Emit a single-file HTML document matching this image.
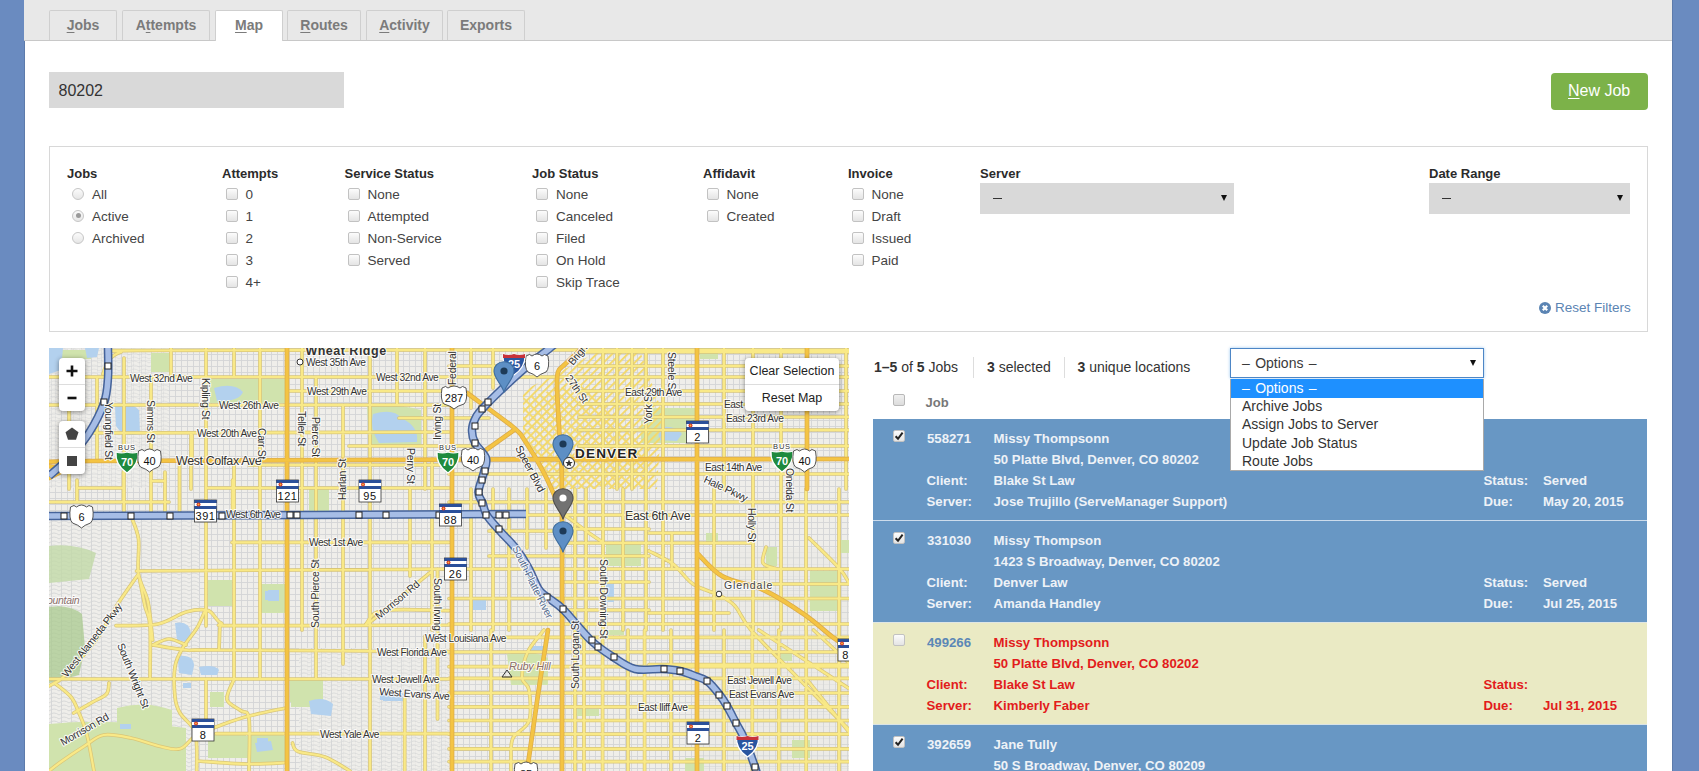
<!DOCTYPE html>
<html><head><meta charset="utf-8">
<style>
*{box-sizing:border-box;margin:0;padding:0}
html,body{width:1699px;height:771px;overflow:hidden}
body{background:#6a8bc0;font-family:"Liberation Sans",sans-serif;color:#333;position:relative}
.t{position:absolute;white-space:nowrap}
.b{position:absolute}
.cb{position:absolute;width:12px;height:12px;border:1px solid #c2c2c2;border-radius:2px;background:linear-gradient(#fcfcfc,#e4e4e4)}
.rd{position:absolute;width:12px;height:12px;border:1px solid #c6c6c6;border-radius:50%;background:linear-gradient(#fbfbfb,#e6e6e6)}
.tab{position:absolute;top:10px;height:30px;border:1px solid #cfcfcf;border-bottom:none;background:#e8e8e8;color:#7b7b7b;font-weight:bold;font-size:14px;text-align:center;line-height:28px;border-radius:2px 2px 0 0}
.tab.act{background:#fff;height:31px}
u{text-decoration:underline;text-underline-offset:2px;text-decoration-thickness:1px}
</style></head><body>

<div class="b" style="left:24px;top:0;width:1648px;height:771px;background:#fff"></div>
<div class="b" style="left:24px;top:0;width:1px;height:771px;background:#5d7bab"></div>
<div class="b" style="left:1672px;top:0;width:1px;height:771px;background:#5d7bab"></div>
<div class="b" style="left:24px;top:0;width:1648px;height:41px;background:#e8e8e8;border-bottom:1px solid #c8c8c8"></div>
<div class="tab" style="left:49px;width:68px"><u>J</u>obs</div>
<div class="tab" style="left:122px;width:88px">A<u>t</u>tempts</div>
<div class="tab act" style="left:215px;width:68px"><u>M</u>ap</div>
<div class="tab" style="left:287px;width:74px"><u>R</u>outes</div>
<div class="tab" style="left:366px;width:77px"><u>A</u>ctivity</div>
<div class="tab" style="left:447px;width:78px">Exports</div>
<div class="b" style="left:49px;top:72px;width:295px;height:36px;background:#d9d9d9"></div>
<div class="t" style="left:58.5px;top:82.66px;font-size:16px;line-height:16px;color:#333;">80202</div>
<div class="b" style="left:1551px;top:73px;width:97px;height:37px;background:#7cb249;border-radius:4px"></div>
<div class="t" style="left:1568px;top:83.46px;font-size:16px;line-height:16px;color:#fff;"><u>N</u>ew Job</div>
<div class="b" style="left:49px;top:146px;width:1599px;height:186px;border:1px solid #d8d8d8"></div>
<div class="t" style="left:67px;top:166.80px;font-size:13px;line-height:13px;color:#2b2b2b;font-weight:bold;">Jobs</div>
<div class="t" style="left:222px;top:166.80px;font-size:13px;line-height:13px;color:#2b2b2b;font-weight:bold;">Attempts</div>
<div class="t" style="left:344.5px;top:166.80px;font-size:13px;line-height:13px;color:#2b2b2b;font-weight:bold;">Service Status</div>
<div class="t" style="left:532px;top:166.80px;font-size:13px;line-height:13px;color:#2b2b2b;font-weight:bold;">Job Status</div>
<div class="t" style="left:703px;top:166.80px;font-size:13px;line-height:13px;color:#2b2b2b;font-weight:bold;">Affidavit</div>
<div class="t" style="left:848px;top:166.80px;font-size:13px;line-height:13px;color:#2b2b2b;font-weight:bold;">Invoice</div>
<div class="t" style="left:980px;top:166.80px;font-size:13px;line-height:13px;color:#2b2b2b;font-weight:bold;">Server</div>
<div class="t" style="left:1429px;top:166.80px;font-size:13px;line-height:13px;color:#2b2b2b;font-weight:bold;">Date Range</div>
<div class="rd" style="left:72px;top:187.5px"></div>
<div class="t" style="left:92px;top:188.27px;font-size:13.5px;line-height:13.5px;color:#444;">All</div>
<div class="rd" style="left:72px;top:209.5px"></div>
<div class="b" style="left:75.5px;top:213.0px;width:5px;height:5px;border-radius:50%;background:#9a9a9a"></div>
<div class="t" style="left:92px;top:210.27px;font-size:13.5px;line-height:13.5px;color:#444;">Active</div>
<div class="rd" style="left:72px;top:231.5px"></div>
<div class="t" style="left:92px;top:232.27px;font-size:13.5px;line-height:13.5px;color:#444;">Archived</div>
<div class="cb" style="left:226px;top:187.5px"></div>
<div class="t" style="left:245.5px;top:188.27px;font-size:13.5px;line-height:13.5px;color:#444;">0</div>
<div class="cb" style="left:226px;top:209.5px"></div>
<div class="t" style="left:245.5px;top:210.27px;font-size:13.5px;line-height:13.5px;color:#444;">1</div>
<div class="cb" style="left:226px;top:231.5px"></div>
<div class="t" style="left:245.5px;top:232.27px;font-size:13.5px;line-height:13.5px;color:#444;">2</div>
<div class="cb" style="left:226px;top:253.5px"></div>
<div class="t" style="left:245.5px;top:254.27px;font-size:13.5px;line-height:13.5px;color:#444;">3</div>
<div class="cb" style="left:226px;top:275.5px"></div>
<div class="t" style="left:245.5px;top:276.27px;font-size:13.5px;line-height:13.5px;color:#444;">4+</div>
<div class="cb" style="left:348px;top:187.5px"></div>
<div class="t" style="left:367.5px;top:188.27px;font-size:13.5px;line-height:13.5px;color:#444;">None</div>
<div class="cb" style="left:348px;top:209.5px"></div>
<div class="t" style="left:367.5px;top:210.27px;font-size:13.5px;line-height:13.5px;color:#444;">Attempted</div>
<div class="cb" style="left:348px;top:231.5px"></div>
<div class="t" style="left:367.5px;top:232.27px;font-size:13.5px;line-height:13.5px;color:#444;">Non-Service</div>
<div class="cb" style="left:348px;top:253.5px"></div>
<div class="t" style="left:367.5px;top:254.27px;font-size:13.5px;line-height:13.5px;color:#444;">Served</div>
<div class="cb" style="left:536px;top:187.5px"></div>
<div class="t" style="left:556px;top:188.27px;font-size:13.5px;line-height:13.5px;color:#444;">None</div>
<div class="cb" style="left:536px;top:209.5px"></div>
<div class="t" style="left:556px;top:210.27px;font-size:13.5px;line-height:13.5px;color:#444;">Canceled</div>
<div class="cb" style="left:536px;top:231.5px"></div>
<div class="t" style="left:556px;top:232.27px;font-size:13.5px;line-height:13.5px;color:#444;">Filed</div>
<div class="cb" style="left:536px;top:253.5px"></div>
<div class="t" style="left:556px;top:254.27px;font-size:13.5px;line-height:13.5px;color:#444;">On Hold</div>
<div class="cb" style="left:536px;top:275.5px"></div>
<div class="t" style="left:556px;top:276.27px;font-size:13.5px;line-height:13.5px;color:#444;">Skip Trace</div>
<div class="cb" style="left:707px;top:187.5px"></div>
<div class="t" style="left:726.5px;top:188.27px;font-size:13.5px;line-height:13.5px;color:#444;">None</div>
<div class="cb" style="left:707px;top:209.5px"></div>
<div class="t" style="left:726.5px;top:210.27px;font-size:13.5px;line-height:13.5px;color:#444;">Created</div>
<div class="cb" style="left:852px;top:187.5px"></div>
<div class="t" style="left:871.5px;top:188.27px;font-size:13.5px;line-height:13.5px;color:#444;">None</div>
<div class="cb" style="left:852px;top:209.5px"></div>
<div class="t" style="left:871.5px;top:210.27px;font-size:13.5px;line-height:13.5px;color:#444;">Draft</div>
<div class="cb" style="left:852px;top:231.5px"></div>
<div class="t" style="left:871.5px;top:232.27px;font-size:13.5px;line-height:13.5px;color:#444;">Issued</div>
<div class="cb" style="left:852px;top:253.5px"></div>
<div class="t" style="left:871.5px;top:254.27px;font-size:13.5px;line-height:13.5px;color:#444;">Paid</div>
<div class="b" style="left:980px;top:183px;width:254px;height:31px;background:#d9d9d9"></div>
<div class="b" style="left:993px;top:198px;width:9px;height:1px;background:#333"></div>
<div class="b" style="left:1221px;top:195px;width:0;height:0;border-left:3.5px solid transparent;border-right:3.5px solid transparent;border-top:6px solid #111"></div>
<div class="b" style="left:1429px;top:183px;width:201px;height:31px;background:#d9d9d9"></div>
<div class="b" style="left:1442px;top:198px;width:9px;height:1px;background:#333"></div>
<div class="b" style="left:1617px;top:195px;width:0;height:0;border-left:3.5px solid transparent;border-right:3.5px solid transparent;border-top:6px solid #111"></div>
<div class="b" style="left:1539px;top:302px;width:12px;height:12px;border-radius:50%;background:#5b84b3"></div>
<svg class="b" style="left:1539px;top:302px" width="12" height="12"><path d="M3.8 3.8L8.2 8.2M8.2 3.8L3.8 8.2" stroke="#fff" stroke-width="2.2"/></svg>
<div class="t" style="left:1555px;top:301.27px;font-size:13.5px;line-height:13.5px;color:#5b84b3;">Reset Filters</div>
<svg class="b" style="left:49px;top:348px" width="800" height="423" viewBox="0 0 800 423" font-family="Liberation Sans, sans-serif">
<defs>
<pattern id="blk" width="6" height="6" patternUnits="userSpaceOnUse"><rect width="6" height="6" fill="#efeeea"/><path d="M0 0.5H6M0.5 0V6" stroke="#d4d5d6" stroke-width="0.9"/></pattern>
<pattern id="blk2" width="6" height="11" patternUnits="userSpaceOnUse"><rect width="6" height="11" fill="#ebeae5"/><path d="M0 0.4H6M0.4 0V11" stroke="#cfd0d0" stroke-width="0.8"/></pattern>
<pattern id="curv" width="10" height="8" patternUnits="userSpaceOnUse"><rect width="10" height="8" fill="#efeeea"/><path d="M0 3Q5 -1 10 3M0 7Q5 3 10 7M2.5 0V8" stroke="#d4d5d6" stroke-width="0.9" fill="none"/></pattern>
<pattern id="diag" width="5.5" height="5.5" patternUnits="userSpaceOnUse" patternTransform="rotate(-45)"><path d="M0 1H5.5" stroke="#f3d96c" stroke-width="2"/></pattern><pattern id="diag2" width="7" height="7" patternUnits="userSpaceOnUse" patternTransform="rotate(45)"><path d="M0 1H7" stroke="#f3d96c" stroke-width="1.8"/></pattern>
</defs>
<rect width="800" height="423" fill="url(#blk)"/>
<rect x="0" y="168" width="150" height="255" fill="url(#curv)"/>
<rect x="0" y="0" width="120" height="140" fill="url(#curv)" opacity="0.6"/>
<rect x="250" y="300" width="150" height="123" fill="url(#curv)" opacity="0.8"/>
<rect x="650" y="200" width="150" height="223" fill="url(#blk2)" opacity="0.7"/>
<path d="M7 2 L42 2 L42 11 L7 11Z" fill="#d0e3ad"/>
<path d="M102 5 L121 5 L121 24 L102 24Z" fill="#d0e3ad"/>
<path d="M161 31 L200 31 L200 55 L161 55Z" fill="#d0e3ad"/>
<path d="M200 31 L237 31 L237 55 L200 55Z" fill="#d0e3ad"/>
<path d="M318 58 Q345 55 372 62 L372 98 L320 98Z" fill="#d0e3ad"/>
<path d="M592 73 L600 73 L600 95 L592 95Z" fill="#d0e3ad"/>
<path d="M600 60 L646 60 L646 95 L600 95Z" fill="#d0e3ad"/>
<path d="M651 0 L669 0 L669 11 L651 11Z" fill="#d0e3ad"/>
<path d="M159 232 L183 232 L183 258 L159 258Z" fill="#d0e3ad"/>
<path d="M260 141 L280 141 L280 163 L260 163Z" fill="#d0e3ad"/>
<path d="M211 236 L237 236 L237 265 L211 265Z" fill="#d0e3ad"/>
<path d="M557 196 L592 196 L592 218 L557 218Z" fill="#d0e3ad"/>
<path d="M717 199 L728 199 L728 218 L717 218Z" fill="#d0e3ad"/>
<path d="M761 223 L792 223 L792 263 L761 263Z" fill="#d0e3ad"/>
<path d="M657 185 L669 185 L669 194 L657 194Z" fill="#d0e3ad"/>
<path d="M790 192 L800 192 L800 205 L790 205Z" fill="#d0e3ad"/>
<path d="M0 376 Q60 370 137 380 L137 423 L0 423Z" fill="#d0e3ad"/>
<path d="M68 360 Q95 352 123 362 L123 398 L68 398Z" fill="#d0e3ad"/>
<path d="M164 239 L178 239 L178 256 L164 256Z" fill="#d0e3ad"/>
<path d="M213 239 L235 239 L235 264 L213 264Z" fill="#d0e3ad"/>
<path d="M241 332 L274 332 L274 354 L241 354Z" fill="#d0e3ad"/>
<path d="M159 387 L197 387 L197 409 L159 409Z" fill="#d0e3ad"/>
<path d="M200 387 L235 387 L235 409 L200 409Z" fill="#d0e3ad"/>
<path d="M161 344 L175 344 L175 359 L161 359Z" fill="#d0e3ad"/>
<path d="M159 388 L200 388 L200 410 L159 410Z" fill="#d0e3ad"/>
<path d="M242 333 L273 333 L273 359 L242 359Z" fill="#d0e3ad"/>
<path d="M200 388 L237 388 L237 414 L200 414Z" fill="#d0e3ad"/>
<path d="M458 306 Q480 300 499 310 L499 337 L462 337Z" fill="#d0e3ad"/>
<path d="M528 361 L550 361 L550 368 L528 368Z" fill="#d0e3ad"/>
<path d="M557 282 L575 282 L575 287 L557 287Z" fill="#d0e3ad"/>
<path d="M732 304 L743 304 L743 313 L732 313Z" fill="#d0e3ad"/>
<path d="M743 392 L761 392 L761 410 L743 410Z" fill="#d0e3ad"/>
<path d="M636 410 L655 410 L655 423 L636 423Z" fill="#d0e3ad"/>
<path d="M0 259 Q20 256 33 266 L36 300 L30 327 L0 335Z" fill="#a9c98f" opacity="0.75"/>
<path d="M0 198 Q25 195 47 205 L40 231 L0 235Z" fill="#c2d9a8" opacity="0.8"/>
<path d="M0 0 L14 0 L12 22 L0 26Z" fill="#b3d1ee"/>
<path d="M36 0 L50 0 L48 9 L38 10Z" fill="#b3d1ee"/>
<path d="M324 66 Q345 60 352 70 Q370 78 368 94 L330 95 Q320 80 324 66Z" fill="#b3d1ee"/>
<path d="M66 58 Q80 52 90 62 L91 86 Q74 90 67 78Z" fill="#b3d1ee"/>
<path d="M165 40 Q185 34 194 44 Q190 54 168 53Z" fill="#b3d1ee"/>
<path d="M609 80 Q625 76 633 86 L628 93 L610 92Z" fill="#b3d1ee"/>
<path d="M216 243 L226 243 L226 252 L216 252Z" fill="#b3d1ee"/>
<path d="M424 251 L437 251 L437 262 L424 262Z" fill="#b3d1ee"/>
<path d="M557 236 L565 236 L565 254 L557 254Z" fill="#b3d1ee"/>
<path d="M126 275 Q140 272 142 285 L140 294 L128 292Z" fill="#b3d1ee"/>
<path d="M128.6 308 Q145 306 145 318 L143 327 L130 325Z" fill="#b3d1ee"/>
<path d="M150 319 Q166 316 170 322 L168 327 L152 327Z" fill="#b3d1ee"/>
<path d="M134 335 L142 335 L142 340 L134 340Z" fill="#b3d1ee"/>
<path d="M71 376 L82 376 L82 381 L71 381Z" fill="#b3d1ee"/>
<path d="M219 242 L230 242 L230 253 L219 253Z" fill="#b3d1ee"/>
<path d="M208 390 L219 390 L219 401 L208 401Z" fill="#b3d1ee"/>
<path d="M331 346 L345 346 L345 352 L331 352Z" fill="#b3d1ee"/>
<path d="M260 353 Q275 348 284 356 L282 368 L262 366Z" fill="#b3d1ee"/>
<path d="M206 395 L222 393 L224 402 L208 404Z" fill="#b3d1ee"/>
<path d="M332 345 Q345 342 355 346 L354 353 L334 353Z" fill="#b3d1ee"/>
<path d="M480 298 L495 298 L495 304 L480 304Z" fill="#b3d1ee"/>
<path d="M474 43 L550 3 L591 3 L613 63 L608 141 L505 141 L474 86Z" fill="url(#diag)"/>
<path d="M474 50 L530 35 L590 90 L600 141 L505 141 L474 86Z" fill="url(#diag2)"/>
<path d="M54.0 26.0 C55.0 23.7 57.0 15.7 60.0 12.0 C63.0 8.3 67.0 5.6 72.0 4.0 C77.0 2.4 35.3 2.8 90.0 2.5 C144.7 2.2 348.3 2.1 400.0 2.0 M400.0 2.0 L800.0 2.0 M0.0 29.0 L800.0 29.0 M238.0 43.0 L400.0 43.0 M0.0 57.0 L400.0 57.0 M350.0 70.0 L400.0 70.0 M40.0 85.0 L400.0 84.0 M300.0 98.0 L400.0 98.0 M200.0 117.0 L400.0 117.0 M20.0 57.0 L20.0 141.0 M48.0 29.0 L48.0 112.0 M75.0 10.0 L75.0 168.0 M102.0 29.0 L102.0 168.0 M122.0 0.0 L122.0 29.0 M142.0 85.0 L142.0 141.0 M157.0 0.0 L157.0 278.0 M185.0 0.0 L185.0 29.0 M185.0 112.0 L185.0 332.0 M211.0 0.0 L211.0 330.0 M253.0 0.0 L253.0 282.0 M267.0 29.0 L267.0 330.0 M294.0 57.0 L294.0 316.0 M321.0 0.0 L321.0 423.0 M348.0 0.0 L348.0 57.0 M376.0 0.0 L376.0 141.0 M383.0 111.0 L383.0 282.0 M0.0 154.0 L120.0 154.0 M87.5 223.0 L400.0 221.0 M183.0 194.4 L400.0 194.4 M28.0 140.0 L74.0 140.0 M158.0 140.0 L400.0 140.0 M102.0 133.0 L116.0 133.0 M28.0 132.0 L28.0 154.0 M74.5 124.0 L74.5 153.0 M116.0 124.0 L116.0 163.0 M130.5 116.0 L130.5 163.0 M143.0 87.0 L143.0 109.0 M183.6 132.0 L183.6 168.0 M82.0 168.0 C83.2 171.8 88.2 181.3 89.5 191.0 C90.8 200.7 87.9 215.5 89.5 226.0 C91.1 236.5 96.7 243.0 99.0 254.0 C101.3 265.0 102.8 285.7 103.6 292.0 M67.0 277.7 C74.0 277.4 97.3 278.3 109.0 276.0 C120.7 273.7 128.7 266.2 137.0 264.0 C145.3 261.8 153.2 260.8 159.0 262.6 C164.8 264.4 166.6 272.5 172.0 275.0 C177.4 277.5 153.5 277.4 191.5 277.7 C229.5 278.0 365.2 277.1 400.0 277.0 M317.0 276.0 C319.8 273.8 320.2 264.8 334.0 262.6 C347.8 260.4 389.0 262.6 400.0 262.6 M361.0 141.0 L361.0 228.0 M89.5 226.0 C85.9 231.2 75.1 246.0 68.0 257.0 C60.9 268.0 55.6 280.3 47.0 292.0 C38.4 303.7 23.3 319.8 16.4 327.0 C9.5 334.2 8.2 333.2 5.5 335.0 C2.8 336.8 0.9 337.5 0.0 338.0 M104.0 297.0 C109.5 297.8 126.0 301.2 137.0 302.0 C148.0 302.8 126.2 301.7 170.0 302.0 C213.8 302.3 361.7 303.3 400.0 303.6 M104.0 297.0 C106.7 296.0 114.5 291.0 120.0 291.0 C125.5 291.0 134.2 296.0 137.0 297.0 M0.0 331.0 L400.0 331.0 M0.0 423.0 C1.8 421.6 5.1 418.7 11.0 414.5 C16.9 410.3 28.3 402.6 35.6 398.0 C42.9 393.4 47.0 388.3 54.7 387.0 C62.4 385.7 72.9 388.2 82.0 390.0 C91.1 391.8 101.2 396.2 109.4 398.0 C117.6 399.8 124.6 402.6 131.0 400.8 C137.4 399.0 140.4 391.1 147.7 387.0 C155.0 382.9 166.3 379.2 175.0 376.0 C183.7 372.8 189.5 370.7 200.0 368.0 C210.5 365.3 231.7 361.1 238.0 359.7 M167.0 385.7 L400.0 385.7 M90.0 228.0 C91.0 233.0 94.2 249.7 96.0 258.0 C97.8 266.3 100.2 265.7 101.0 277.7 C101.8 289.7 101.0 321.3 101.0 330.0 M156.0 262.6 C154.7 265.5 151.7 273.9 148.0 280.0 C144.3 286.1 137.7 293.1 134.0 299.5 C130.3 305.9 127.3 310.4 126.0 318.7 C124.7 326.9 125.2 341.3 126.0 349.0 C126.8 356.7 127.8 359.6 131.0 365.0 C134.2 370.4 142.2 376.1 145.0 381.6 C147.8 387.1 147.2 391.1 147.7 398.0 C148.1 404.9 147.7 418.8 147.7 423.0 M157.0 331.0 L157.0 371.0 M171.0 275.0 L170.0 302.0 M184.7 332.0 C183.6 335.2 176.9 346.4 178.0 351.5 C179.1 356.6 187.8 359.3 191.5 362.5 C195.2 365.7 198.6 360.6 200.0 370.7 C201.4 380.8 200.0 414.3 200.0 423.0 M355.7 349.0 L355.7 423.0 M376.0 288.0 L376.0 423.0 M388.5 221.0 L388.5 371.0 M243.5 395.0 C244.4 396.4 243.6 401.2 249.0 403.5 C254.4 405.8 267.3 405.8 276.0 409.0 C284.7 412.2 296.8 420.7 301.0 423.0 M148.0 413.0 C156.2 413.5 182.0 415.8 197.0 416.0 C212.0 416.2 231.2 414.8 238.0 414.5 M5.5 335.0 C8.2 337.3 17.9 344.0 22.0 349.0 C26.1 354.0 27.3 358.7 30.0 365.0 C32.7 371.3 35.5 377.3 38.0 387.0 C40.5 396.7 43.8 417.0 45.0 423.0 M24.6 365.0 C27.8 363.2 38.3 357.2 43.8 354.0 C49.3 350.8 54.8 349.2 57.5 346.0 C60.2 342.8 59.6 336.8 60.0 335.0 M320.0 275.0 L383.0 223.0 M530.0 4.0 L800.0 4.0 M530.0 18.0 L800.0 18.0 M530.0 43.0 L800.0 43.0 M530.0 56.0 L800.0 56.0 M530.0 69.0 L800.0 69.0 M530.0 82.0 L800.0 82.0 M530.0 98.0 L800.0 98.0 M400.0 126.0 L800.0 126.0 M400.0 70.0 L440.0 70.0 M400.0 18.0 L470.0 18.0 M400.0 98.0 L430.0 98.0 M444.0 0.0 L444.0 40.0 M554.0 0.0 L554.0 141.0 M568.0 0.0 L568.0 141.0 M583.0 0.0 L583.0 141.0 M597.0 0.0 L597.0 141.0 M614.0 0.0 L614.0 141.0 M675.0 0.0 L675.0 141.0 M704.0 0.0 L704.0 141.0 M732.0 0.0 L732.0 141.0 M797.0 0.0 L797.0 141.0 M422.0 0.0 L422.0 60.0 M400.0 154.0 L800.0 154.0 M477.0 167.0 L800.0 167.0 M440.0 183.0 L513.0 183.0 M513.0 195.0 L702.0 195.0 M440.0 208.0 L600.0 208.0 M400.0 221.0 L800.0 221.0 M513.0 234.0 L600.0 234.0 M400.0 250.5 L800.0 250.5 M513.0 262.0 L600.0 262.0 M400.0 276.0 L800.0 276.0 M422.0 141.0 L422.0 282.0 M444.0 141.0 L444.0 282.0 M460.0 141.0 L460.0 282.0 M478.0 141.0 L478.0 200.0 M497.0 141.0 L497.0 200.0 M526.0 141.0 L526.0 282.0 M537.0 141.0 L537.0 282.0 M554.0 141.0 L554.0 282.0 M574.0 141.0 L574.0 282.0 M597.0 141.0 L597.0 282.0 M614.0 141.0 L614.0 282.0 M665.0 141.0 L665.0 282.0 M704.0 141.0 L704.0 282.0 M732.0 141.0 L732.0 282.0 M757.0 141.0 L757.0 282.0 M790.0 141.0 L790.0 282.0 M622.8 185.0 L622.8 221.0 M717.0 199.0 C716.5 201.7 712.2 211.3 714.0 215.0 C715.8 218.7 725.7 220.0 728.0 221.0 M513.0 165.0 C517.5 168.3 533.0 180.0 540.0 185.0 C547.0 190.0 552.5 193.3 555.0 195.0 M600.0 203.0 C604.0 205.2 616.7 210.5 624.0 216.0 C631.3 221.5 636.4 230.8 644.0 236.0 C651.6 241.2 662.5 243.3 669.5 247.0 C676.5 250.7 680.6 252.2 686.0 258.0 C691.4 263.8 691.3 269.8 702.0 282.0 C712.7 294.2 733.7 314.4 750.0 331.0 C766.3 347.6 791.7 373.2 800.0 381.6 M760.0 190.0 C765.0 195.0 783.3 212.5 790.0 220.0 C796.7 227.5 798.3 232.5 800.0 235.0 M400.0 289.3 L800.0 289.3 M400.0 304.0 L800.0 304.0 M400.0 318.7 L800.0 318.7 M400.0 400.8 L800.0 400.8 M400.0 330.4 L800.0 330.4 M513.0 181.0 L600.0 181.0 M600.0 185.0 L646.0 185.0 M703.0 236.0 L800.0 236.0 M600.0 265.0 L680.0 265.0 M400.0 345.0 L800.0 345.0 M400.0 358.8 L800.0 358.8 M400.0 372.5 L800.0 372.5 M400.0 386.2 L800.0 386.2 M400.0 413.6 L800.0 413.6 M600.0 316.7 L800.0 316.7 M442.0 282.0 L442.0 423.0 M526.0 282.0 L526.0 423.0 M535.0 282.0 L535.0 423.0 M553.6 282.0 L553.6 423.0 M579.0 282.0 L579.0 423.0 M595.6 282.0 L595.6 423.0 M622.0 282.0 L622.0 423.0 M675.0 282.0 L675.0 423.0 M703.3 282.0 L703.3 423.0 M729.8 282.0 L729.8 423.0 M757.2 282.0 L757.2 423.0 M790.0 282.0 L790.0 423.0 M495.0 282.0 C492.3 285.7 482.3 296.1 478.6 304.0 C474.9 311.9 472.8 323.2 473.0 329.5 C473.2 335.8 478.8 334.8 480.0 342.0 C481.2 349.2 482.7 365.0 480.0 373.0 C477.3 381.0 467.0 383.8 464.0 390.0 C461.0 396.2 462.3 404.5 462.0 410.0 C461.7 415.5 462.0 420.8 462.0 423.0 M709.7 282.0 L800.0 340.5 M764.5 282.0 L800.0 315.0 M759.0 333.0 L800.0 384.0" fill="none" stroke="#d9c678" stroke-width="3.7" stroke-linejoin="round" stroke-linecap="round"/>
<path d="M54.0 26.0 C55.0 23.7 57.0 15.7 60.0 12.0 C63.0 8.3 67.0 5.6 72.0 4.0 C77.0 2.4 35.3 2.8 90.0 2.5 C144.7 2.2 348.3 2.1 400.0 2.0 M400.0 2.0 L800.0 2.0 M0.0 29.0 L800.0 29.0 M238.0 43.0 L400.0 43.0 M0.0 57.0 L400.0 57.0 M350.0 70.0 L400.0 70.0 M40.0 85.0 L400.0 84.0 M300.0 98.0 L400.0 98.0 M200.0 117.0 L400.0 117.0 M20.0 57.0 L20.0 141.0 M48.0 29.0 L48.0 112.0 M75.0 10.0 L75.0 168.0 M102.0 29.0 L102.0 168.0 M122.0 0.0 L122.0 29.0 M142.0 85.0 L142.0 141.0 M157.0 0.0 L157.0 278.0 M185.0 0.0 L185.0 29.0 M185.0 112.0 L185.0 332.0 M211.0 0.0 L211.0 330.0 M253.0 0.0 L253.0 282.0 M267.0 29.0 L267.0 330.0 M294.0 57.0 L294.0 316.0 M321.0 0.0 L321.0 423.0 M348.0 0.0 L348.0 57.0 M376.0 0.0 L376.0 141.0 M383.0 111.0 L383.0 282.0 M0.0 154.0 L120.0 154.0 M87.5 223.0 L400.0 221.0 M183.0 194.4 L400.0 194.4 M28.0 140.0 L74.0 140.0 M158.0 140.0 L400.0 140.0 M102.0 133.0 L116.0 133.0 M28.0 132.0 L28.0 154.0 M74.5 124.0 L74.5 153.0 M116.0 124.0 L116.0 163.0 M130.5 116.0 L130.5 163.0 M143.0 87.0 L143.0 109.0 M183.6 132.0 L183.6 168.0 M82.0 168.0 C83.2 171.8 88.2 181.3 89.5 191.0 C90.8 200.7 87.9 215.5 89.5 226.0 C91.1 236.5 96.7 243.0 99.0 254.0 C101.3 265.0 102.8 285.7 103.6 292.0 M67.0 277.7 C74.0 277.4 97.3 278.3 109.0 276.0 C120.7 273.7 128.7 266.2 137.0 264.0 C145.3 261.8 153.2 260.8 159.0 262.6 C164.8 264.4 166.6 272.5 172.0 275.0 C177.4 277.5 153.5 277.4 191.5 277.7 C229.5 278.0 365.2 277.1 400.0 277.0 M317.0 276.0 C319.8 273.8 320.2 264.8 334.0 262.6 C347.8 260.4 389.0 262.6 400.0 262.6 M361.0 141.0 L361.0 228.0 M89.5 226.0 C85.9 231.2 75.1 246.0 68.0 257.0 C60.9 268.0 55.6 280.3 47.0 292.0 C38.4 303.7 23.3 319.8 16.4 327.0 C9.5 334.2 8.2 333.2 5.5 335.0 C2.8 336.8 0.9 337.5 0.0 338.0 M104.0 297.0 C109.5 297.8 126.0 301.2 137.0 302.0 C148.0 302.8 126.2 301.7 170.0 302.0 C213.8 302.3 361.7 303.3 400.0 303.6 M104.0 297.0 C106.7 296.0 114.5 291.0 120.0 291.0 C125.5 291.0 134.2 296.0 137.0 297.0 M0.0 331.0 L400.0 331.0 M0.0 423.0 C1.8 421.6 5.1 418.7 11.0 414.5 C16.9 410.3 28.3 402.6 35.6 398.0 C42.9 393.4 47.0 388.3 54.7 387.0 C62.4 385.7 72.9 388.2 82.0 390.0 C91.1 391.8 101.2 396.2 109.4 398.0 C117.6 399.8 124.6 402.6 131.0 400.8 C137.4 399.0 140.4 391.1 147.7 387.0 C155.0 382.9 166.3 379.2 175.0 376.0 C183.7 372.8 189.5 370.7 200.0 368.0 C210.5 365.3 231.7 361.1 238.0 359.7 M167.0 385.7 L400.0 385.7 M90.0 228.0 C91.0 233.0 94.2 249.7 96.0 258.0 C97.8 266.3 100.2 265.7 101.0 277.7 C101.8 289.7 101.0 321.3 101.0 330.0 M156.0 262.6 C154.7 265.5 151.7 273.9 148.0 280.0 C144.3 286.1 137.7 293.1 134.0 299.5 C130.3 305.9 127.3 310.4 126.0 318.7 C124.7 326.9 125.2 341.3 126.0 349.0 C126.8 356.7 127.8 359.6 131.0 365.0 C134.2 370.4 142.2 376.1 145.0 381.6 C147.8 387.1 147.2 391.1 147.7 398.0 C148.1 404.9 147.7 418.8 147.7 423.0 M157.0 331.0 L157.0 371.0 M171.0 275.0 L170.0 302.0 M184.7 332.0 C183.6 335.2 176.9 346.4 178.0 351.5 C179.1 356.6 187.8 359.3 191.5 362.5 C195.2 365.7 198.6 360.6 200.0 370.7 C201.4 380.8 200.0 414.3 200.0 423.0 M355.7 349.0 L355.7 423.0 M376.0 288.0 L376.0 423.0 M388.5 221.0 L388.5 371.0 M243.5 395.0 C244.4 396.4 243.6 401.2 249.0 403.5 C254.4 405.8 267.3 405.8 276.0 409.0 C284.7 412.2 296.8 420.7 301.0 423.0 M148.0 413.0 C156.2 413.5 182.0 415.8 197.0 416.0 C212.0 416.2 231.2 414.8 238.0 414.5 M5.5 335.0 C8.2 337.3 17.9 344.0 22.0 349.0 C26.1 354.0 27.3 358.7 30.0 365.0 C32.7 371.3 35.5 377.3 38.0 387.0 C40.5 396.7 43.8 417.0 45.0 423.0 M24.6 365.0 C27.8 363.2 38.3 357.2 43.8 354.0 C49.3 350.8 54.8 349.2 57.5 346.0 C60.2 342.8 59.6 336.8 60.0 335.0 M320.0 275.0 L383.0 223.0 M530.0 4.0 L800.0 4.0 M530.0 18.0 L800.0 18.0 M530.0 43.0 L800.0 43.0 M530.0 56.0 L800.0 56.0 M530.0 69.0 L800.0 69.0 M530.0 82.0 L800.0 82.0 M530.0 98.0 L800.0 98.0 M400.0 126.0 L800.0 126.0 M400.0 70.0 L440.0 70.0 M400.0 18.0 L470.0 18.0 M400.0 98.0 L430.0 98.0 M444.0 0.0 L444.0 40.0 M554.0 0.0 L554.0 141.0 M568.0 0.0 L568.0 141.0 M583.0 0.0 L583.0 141.0 M597.0 0.0 L597.0 141.0 M614.0 0.0 L614.0 141.0 M675.0 0.0 L675.0 141.0 M704.0 0.0 L704.0 141.0 M732.0 0.0 L732.0 141.0 M797.0 0.0 L797.0 141.0 M422.0 0.0 L422.0 60.0 M400.0 154.0 L800.0 154.0 M477.0 167.0 L800.0 167.0 M440.0 183.0 L513.0 183.0 M513.0 195.0 L702.0 195.0 M440.0 208.0 L600.0 208.0 M400.0 221.0 L800.0 221.0 M513.0 234.0 L600.0 234.0 M400.0 250.5 L800.0 250.5 M513.0 262.0 L600.0 262.0 M400.0 276.0 L800.0 276.0 M422.0 141.0 L422.0 282.0 M444.0 141.0 L444.0 282.0 M460.0 141.0 L460.0 282.0 M478.0 141.0 L478.0 200.0 M497.0 141.0 L497.0 200.0 M526.0 141.0 L526.0 282.0 M537.0 141.0 L537.0 282.0 M554.0 141.0 L554.0 282.0 M574.0 141.0 L574.0 282.0 M597.0 141.0 L597.0 282.0 M614.0 141.0 L614.0 282.0 M665.0 141.0 L665.0 282.0 M704.0 141.0 L704.0 282.0 M732.0 141.0 L732.0 282.0 M757.0 141.0 L757.0 282.0 M790.0 141.0 L790.0 282.0 M622.8 185.0 L622.8 221.0 M717.0 199.0 C716.5 201.7 712.2 211.3 714.0 215.0 C715.8 218.7 725.7 220.0 728.0 221.0 M513.0 165.0 C517.5 168.3 533.0 180.0 540.0 185.0 C547.0 190.0 552.5 193.3 555.0 195.0 M600.0 203.0 C604.0 205.2 616.7 210.5 624.0 216.0 C631.3 221.5 636.4 230.8 644.0 236.0 C651.6 241.2 662.5 243.3 669.5 247.0 C676.5 250.7 680.6 252.2 686.0 258.0 C691.4 263.8 691.3 269.8 702.0 282.0 C712.7 294.2 733.7 314.4 750.0 331.0 C766.3 347.6 791.7 373.2 800.0 381.6 M760.0 190.0 C765.0 195.0 783.3 212.5 790.0 220.0 C796.7 227.5 798.3 232.5 800.0 235.0 M400.0 289.3 L800.0 289.3 M400.0 304.0 L800.0 304.0 M400.0 318.7 L800.0 318.7 M400.0 400.8 L800.0 400.8 M400.0 330.4 L800.0 330.4 M513.0 181.0 L600.0 181.0 M600.0 185.0 L646.0 185.0 M703.0 236.0 L800.0 236.0 M600.0 265.0 L680.0 265.0 M400.0 345.0 L800.0 345.0 M400.0 358.8 L800.0 358.8 M400.0 372.5 L800.0 372.5 M400.0 386.2 L800.0 386.2 M400.0 413.6 L800.0 413.6 M600.0 316.7 L800.0 316.7 M442.0 282.0 L442.0 423.0 M526.0 282.0 L526.0 423.0 M535.0 282.0 L535.0 423.0 M553.6 282.0 L553.6 423.0 M579.0 282.0 L579.0 423.0 M595.6 282.0 L595.6 423.0 M622.0 282.0 L622.0 423.0 M675.0 282.0 L675.0 423.0 M703.3 282.0 L703.3 423.0 M729.8 282.0 L729.8 423.0 M757.2 282.0 L757.2 423.0 M790.0 282.0 L790.0 423.0 M495.0 282.0 C492.3 285.7 482.3 296.1 478.6 304.0 C474.9 311.9 472.8 323.2 473.0 329.5 C473.2 335.8 478.8 334.8 480.0 342.0 C481.2 349.2 482.7 365.0 480.0 373.0 C477.3 381.0 467.0 383.8 464.0 390.0 C461.0 396.2 462.3 404.5 462.0 410.0 C461.7 415.5 462.0 420.8 462.0 423.0 M709.7 282.0 L800.0 340.5 M764.5 282.0 L800.0 315.0 M759.0 333.0 L800.0 384.0" fill="none" stroke="#f9e987" stroke-width="2.2" stroke-linejoin="round" stroke-linecap="round"/>
<path d="M0.0 130.0 C3.0 128.5 11.3 123.8 18.0 121.0 C24.7 118.2 -90.3 114.7 40.0 113.0 C170.3 111.3 673.3 111.3 800.0 111.0 M238.0 0.0 L238.0 423.0 M403.0 0.0 L403.0 423.0 M514.0 18.0 C513.2 19.0 510.0 20.3 509.0 24.0 C508.0 27.7 507.8 30.7 508.0 40.0 C508.2 49.3 509.2 63.3 510.0 80.0 C510.8 96.7 512.5 82.8 513.0 140.0 C513.5 197.2 513.0 375.8 513.0 423.0 M514.0 18.0 C516.7 15.5 526.7 6.0 530.0 3.0 C533.3 0.0 533.3 0.5 534.0 0.0 M648.0 0.0 L648.0 423.0 M758.0 0.0 L758.0 141.0 M648.0 205.0 C652.3 208.9 662.5 222.2 673.6 228.4 C684.7 234.6 700.9 235.6 714.6 242.0 C728.3 248.4 744.3 258.9 755.7 266.7 C767.1 274.5 775.6 283.1 783.0 288.6 C790.4 294.2 797.2 298.1 800.0 300.0 M499.0 282.0 C497.5 291.7 493.5 316.5 490.0 340.0 C486.5 363.5 480.0 409.2 478.0 423.0 M418.0 45.0 C425.7 50.7 454.3 71.0 464.0 79.0 C473.7 87.0 470.8 85.3 476.0 93.0 C481.2 100.7 488.8 113.0 495.0 125.0 C501.2 137.0 510.0 158.3 513.0 165.0 M437.0 102.0 L465.0 82.0" fill="none" stroke="#dcab4a" stroke-width="4.7" stroke-linejoin="round" stroke-linecap="round"/>
<path d="M0.0 130.0 C3.0 128.5 11.3 123.8 18.0 121.0 C24.7 118.2 -90.3 114.7 40.0 113.0 C170.3 111.3 673.3 111.3 800.0 111.0 M238.0 0.0 L238.0 423.0 M403.0 0.0 L403.0 423.0 M514.0 18.0 C513.2 19.0 510.0 20.3 509.0 24.0 C508.0 27.7 507.8 30.7 508.0 40.0 C508.2 49.3 509.2 63.3 510.0 80.0 C510.8 96.7 512.5 82.8 513.0 140.0 C513.5 197.2 513.0 375.8 513.0 423.0 M514.0 18.0 C516.7 15.5 526.7 6.0 530.0 3.0 C533.3 0.0 533.3 0.5 534.0 0.0 M648.0 0.0 L648.0 423.0 M758.0 0.0 L758.0 141.0 M648.0 205.0 C652.3 208.9 662.5 222.2 673.6 228.4 C684.7 234.6 700.9 235.6 714.6 242.0 C728.3 248.4 744.3 258.9 755.7 266.7 C767.1 274.5 775.6 283.1 783.0 288.6 C790.4 294.2 797.2 298.1 800.0 300.0 M499.0 282.0 C497.5 291.7 493.5 316.5 490.0 340.0 C486.5 363.5 480.0 409.2 478.0 423.0 M418.0 45.0 C425.7 50.7 454.3 71.0 464.0 79.0 C473.7 87.0 470.8 85.3 476.0 93.0 C481.2 100.7 488.8 113.0 495.0 125.0 C501.2 137.0 510.0 158.3 513.0 165.0 M437.0 102.0 L465.0 82.0" fill="none" stroke="#f4c443" stroke-width="3.2" stroke-linejoin="round" stroke-linecap="round"/>
<path d="M59.0 0.0 C59.0 5.0 59.7 20.8 59.0 30.0 C58.3 39.2 58.2 45.8 55.0 55.0 C51.8 64.2 45.8 75.8 40.0 85.0 C34.2 94.2 26.7 102.8 20.0 110.0 C13.3 117.2 3.3 125.0 0.0 128.0" fill="none" stroke="#45639a" stroke-width="8.5" stroke-linejoin="round"/>
<path d="M59.0 0.0 C59.0 5.0 59.7 20.8 59.0 30.0 C58.3 39.2 58.2 45.8 55.0 55.0 C51.8 64.2 45.8 75.8 40.0 85.0 C34.2 94.2 26.7 102.8 20.0 110.0 C13.3 117.2 3.3 125.0 0.0 128.0" fill="none" stroke="#a6bde6" stroke-width="5.5" stroke-linejoin="round"/>
<path d="M0.0 168.0 L477.0 166.0" fill="none" stroke="#45639a" stroke-width="8.5" stroke-linejoin="round"/>
<path d="M0.0 168.0 L477.0 166.0" fill="none" stroke="#a6bde6" stroke-width="5.5" stroke-linejoin="round"/>
<path d="M512.0 -9.0 C510.2 -7.5 507.2 -5.0 501.0 0.0 C494.8 5.0 483.3 13.8 475.0 21.0 C466.7 28.2 457.5 36.8 451.0 43.0 C444.5 49.2 440.0 53.7 436.0 58.0 C432.0 62.3 429.2 65.0 427.0 69.0 C424.8 73.0 423.2 77.7 423.0 82.0 C422.8 86.3 423.7 90.3 426.0 95.0 C428.3 99.7 435.5 105.2 437.0 110.0 C438.5 114.8 436.3 118.3 435.0 124.0 C433.7 129.7 429.6 138.8 429.4 144.0 C429.2 149.2 432.2 151.2 433.6 155.0 C435.0 158.8 435.0 162.5 437.7 167.0 C440.4 171.5 445.1 176.4 450.0 182.0 C454.9 187.6 462.2 194.3 467.0 200.5 C471.8 206.7 475.2 212.2 479.0 219.0 C482.8 225.8 486.4 236.0 489.6 241.0 C492.8 246.0 493.9 245.6 498.0 249.0 C502.1 252.4 507.2 254.5 514.5 261.7 C521.8 268.9 533.2 284.1 541.5 292.0 C549.8 299.9 556.6 304.2 564.0 309.0 C571.4 313.8 577.8 319.0 586.0 321.0 C594.2 323.0 605.5 320.7 613.0 321.0 C620.5 321.3 625.5 321.8 631.0 323.0 C636.5 324.2 641.5 326.3 646.0 328.0 C650.5 329.7 654.0 330.0 658.0 333.0 C662.0 336.0 666.7 341.8 670.0 346.0 C673.3 350.2 675.2 353.2 678.0 358.0 C680.8 362.8 684.2 369.7 687.0 375.0 C689.8 380.3 691.8 382.7 695.0 390.0 C698.2 397.3 703.7 412.3 706.0 419.0 C708.3 425.7 708.5 428.2 709.0 430.0" fill="none" stroke="#45639a" stroke-width="8.5" stroke-linejoin="round"/>
<path d="M512.0 -9.0 C510.2 -7.5 507.2 -5.0 501.0 0.0 C494.8 5.0 483.3 13.8 475.0 21.0 C466.7 28.2 457.5 36.8 451.0 43.0 C444.5 49.2 440.0 53.7 436.0 58.0 C432.0 62.3 429.2 65.0 427.0 69.0 C424.8 73.0 423.2 77.7 423.0 82.0 C422.8 86.3 423.7 90.3 426.0 95.0 C428.3 99.7 435.5 105.2 437.0 110.0 C438.5 114.8 436.3 118.3 435.0 124.0 C433.7 129.7 429.6 138.8 429.4 144.0 C429.2 149.2 432.2 151.2 433.6 155.0 C435.0 158.8 435.0 162.5 437.7 167.0 C440.4 171.5 445.1 176.4 450.0 182.0 C454.9 187.6 462.2 194.3 467.0 200.5 C471.8 206.7 475.2 212.2 479.0 219.0 C482.8 225.8 486.4 236.0 489.6 241.0 C492.8 246.0 493.9 245.6 498.0 249.0 C502.1 252.4 507.2 254.5 514.5 261.7 C521.8 268.9 533.2 284.1 541.5 292.0 C549.8 299.9 556.6 304.2 564.0 309.0 C571.4 313.8 577.8 319.0 586.0 321.0 C594.2 323.0 605.5 320.7 613.0 321.0 C620.5 321.3 625.5 321.8 631.0 323.0 C636.5 324.2 641.5 326.3 646.0 328.0 C650.5 329.7 654.0 330.0 658.0 333.0 C662.0 336.0 666.7 341.8 670.0 346.0 C673.3 350.2 675.2 353.2 678.0 358.0 C680.8 362.8 684.2 369.7 687.0 375.0 C689.8 380.3 691.8 382.7 695.0 390.0 C698.2 397.3 703.7 412.3 706.0 419.0 C708.3 425.7 708.5 428.2 709.0 430.0" fill="none" stroke="#a6bde6" stroke-width="5.5" stroke-linejoin="round"/>
<rect x="56" y="15" width="6" height="6" fill="#fff" stroke="#222" stroke-width="1"/>
<rect x="52" y="51" width="6" height="6" fill="#fff" stroke="#222" stroke-width="1"/>
<rect x="12" y="165" width="6" height="6" fill="#fff" stroke="#222" stroke-width="1"/>
<rect x="79" y="165" width="6" height="6" fill="#fff" stroke="#222" stroke-width="1"/>
<rect x="118" y="165" width="6" height="6" fill="#fff" stroke="#222" stroke-width="1"/>
<rect x="170" y="165" width="6" height="6" fill="#fff" stroke="#222" stroke-width="1"/>
<rect x="238" y="164" width="6" height="6" fill="#fff" stroke="#222" stroke-width="1"/>
<rect x="245" y="164" width="6" height="6" fill="#fff" stroke="#222" stroke-width="1"/>
<rect x="307" y="164" width="6" height="6" fill="#fff" stroke="#222" stroke-width="1"/>
<rect x="334" y="164" width="6" height="6" fill="#fff" stroke="#222" stroke-width="1"/>
<rect x="387" y="164" width="6" height="6" fill="#fff" stroke="#222" stroke-width="1"/>
<rect x="436" y="51" width="6" height="6" fill="#fff" stroke="#222" stroke-width="1"/>
<rect x="430" y="58" width="6" height="6" fill="#fff" stroke="#222" stroke-width="1"/>
<rect x="423" y="75" width="6" height="6" fill="#fff" stroke="#222" stroke-width="1"/>
<rect x="423" y="92" width="6" height="6" fill="#fff" stroke="#222" stroke-width="1"/>
<rect x="433" y="120" width="6" height="6" fill="#fff" stroke="#222" stroke-width="1"/>
<rect x="430" y="129" width="6" height="6" fill="#fff" stroke="#222" stroke-width="1"/>
<rect x="427" y="141" width="6" height="6" fill="#fff" stroke="#222" stroke-width="1"/>
<rect x="430" y="152" width="6" height="6" fill="#fff" stroke="#222" stroke-width="1"/>
<rect x="434" y="164" width="6" height="6" fill="#fff" stroke="#222" stroke-width="1"/>
<rect x="447" y="164" width="6" height="6" fill="#fff" stroke="#222" stroke-width="1"/>
<rect x="454" y="164" width="6" height="6" fill="#fff" stroke="#222" stroke-width="1"/>
<rect x="447" y="178" width="6" height="6" fill="#fff" stroke="#222" stroke-width="1"/>
<rect x="495" y="246" width="6" height="6" fill="#fff" stroke="#222" stroke-width="1"/>
<rect x="511" y="258" width="6" height="6" fill="#fff" stroke="#222" stroke-width="1"/>
<rect x="540" y="289" width="6" height="6" fill="#fff" stroke="#222" stroke-width="1"/>
<rect x="546" y="296" width="6" height="6" fill="#fff" stroke="#222" stroke-width="1"/>
<rect x="562" y="306" width="6" height="6" fill="#fff" stroke="#222" stroke-width="1"/>
<rect x="612" y="318" width="6" height="6" fill="#fff" stroke="#222" stroke-width="1"/>
<rect x="628" y="320" width="6" height="6" fill="#fff" stroke="#222" stroke-width="1"/>
<rect x="655" y="330" width="6" height="6" fill="#fff" stroke="#222" stroke-width="1"/>
<rect x="667" y="344" width="6" height="6" fill="#fff" stroke="#222" stroke-width="1"/>
<rect x="675" y="355" width="6" height="6" fill="#fff" stroke="#222" stroke-width="1"/>
<rect x="684" y="372" width="6" height="6" fill="#fff" stroke="#222" stroke-width="1"/>
<rect x="703" y="416" width="6" height="6" fill="#fff" stroke="#222" stroke-width="1"/>
<text x="297" y="7" font-size="12.5" fill="#333" stroke="#fff" stroke-width="2.2" stroke-opacity="0.85" paint-order="stroke" stroke-linejoin="round" text-anchor="middle" font-weight="bold" letter-spacing="0.5" >Wheat Ridge</text>
<circle cx="251" cy="14" r="3" fill="#fff" stroke="#333" stroke-width="1"/>
<text x="257" y="18" font-size="10.2" fill="#333" stroke="#fff" stroke-width="2.2" stroke-opacity="0.85" paint-order="stroke" stroke-linejoin="round" text-anchor="start" font-weight="normal" letter-spacing="-0.45" >West 35th Ave</text>
<text x="81" y="34" font-size="10.2" fill="#333" stroke="#fff" stroke-width="2.2" stroke-opacity="0.85" paint-order="stroke" stroke-linejoin="round" text-anchor="start" font-weight="normal" letter-spacing="-0.45" >West 32nd Ave</text>
<text x="327" y="33" font-size="10.2" fill="#333" stroke="#fff" stroke-width="2.2" stroke-opacity="0.85" paint-order="stroke" stroke-linejoin="round" text-anchor="start" font-weight="normal" letter-spacing="-0.45" >West 32nd Ave</text>
<text x="258" y="47" font-size="10.2" fill="#333" stroke="#fff" stroke-width="2.2" stroke-opacity="0.85" paint-order="stroke" stroke-linejoin="round" text-anchor="start" font-weight="normal" letter-spacing="-0.45" >West 29th Ave</text>
<text x="170" y="61" font-size="10.2" fill="#333" stroke="#fff" stroke-width="2.2" stroke-opacity="0.85" paint-order="stroke" stroke-linejoin="round" text-anchor="start" font-weight="normal" letter-spacing="-0.45" >West 26th Ave</text>
<text x="148" y="89" font-size="10.2" fill="#333" stroke="#fff" stroke-width="2.2" stroke-opacity="0.85" paint-order="stroke" stroke-linejoin="round" text-anchor="start" font-weight="normal" letter-spacing="-0.45" >West 20th Ave</text>
<text x="127" y="117" font-size="12.5" fill="#333" stroke="#fff" stroke-width="2.2" stroke-opacity="0.85" paint-order="stroke" stroke-linejoin="round" text-anchor="start" font-weight="normal" letter-spacing="-0.4" >West Colfax Ave</text>
<text x="153" y="30" font-size="10.5" fill="#333" stroke="#fff" stroke-width="2.2" stroke-opacity="0.85" paint-order="stroke" stroke-linejoin="round" text-anchor="start" font-weight="normal" letter-spacing="-0.3"  transform="rotate(90 153 30)">Kipling St</text>
<text x="98" y="52" font-size="10.5" fill="#333" stroke="#fff" stroke-width="2.2" stroke-opacity="0.85" paint-order="stroke" stroke-linejoin="round" text-anchor="start" font-weight="normal" letter-spacing="-0.3"  transform="rotate(90 98 52)">Simms St</text>
<text x="56" y="54" font-size="10.5" fill="#333" stroke="#fff" stroke-width="2.2" stroke-opacity="0.85" paint-order="stroke" stroke-linejoin="round" text-anchor="start" font-weight="normal" letter-spacing="-0.3"  transform="rotate(90 56 54)">Youngfield St</text>
<text x="209" y="80" font-size="10.5" fill="#333" stroke="#fff" stroke-width="2.2" stroke-opacity="0.85" paint-order="stroke" stroke-linejoin="round" text-anchor="start" font-weight="normal" letter-spacing="-0.3"  transform="rotate(90 209 80)">Carr St</text>
<text x="249" y="63" font-size="10.5" fill="#333" stroke="#fff" stroke-width="2.2" stroke-opacity="0.85" paint-order="stroke" stroke-linejoin="round" text-anchor="start" font-weight="normal" letter-spacing="-0.3"  transform="rotate(90 249 63)">Teller St</text>
<text x="263" y="69" font-size="10.5" fill="#333" stroke="#fff" stroke-width="2.2" stroke-opacity="0.85" paint-order="stroke" stroke-linejoin="round" text-anchor="start" font-weight="normal" letter-spacing="-0.3"  transform="rotate(90 263 69)">Pierce St</text>
<text x="358" y="100" font-size="10.5" fill="#333" stroke="#fff" stroke-width="2.2" stroke-opacity="0.85" paint-order="stroke" stroke-linejoin="round" text-anchor="start" font-weight="normal" letter-spacing="-0.3"  transform="rotate(90 358 100)">Perry St</text>
<text x="297" y="152" font-size="10.5" fill="#333" stroke="#fff" stroke-width="2.2" stroke-opacity="0.85" paint-order="stroke" stroke-linejoin="round" text-anchor="start" font-weight="normal" letter-spacing="-0.3"  transform="rotate(-90 297 152)">Harlan St</text>
<text x="392" y="92" font-size="10.5" fill="#333" stroke="#fff" stroke-width="2.2" stroke-opacity="0.85" paint-order="stroke" stroke-linejoin="round" text-anchor="start" font-weight="normal" letter-spacing="-0.3"  transform="rotate(-90 392 92)">Irving St</text>
<text x="407" y="37" font-size="10.5" fill="#333" stroke="#fff" stroke-width="2.2" stroke-opacity="0.85" paint-order="stroke" stroke-linejoin="round" text-anchor="start" font-weight="normal" letter-spacing="-0.3"  transform="rotate(-90 407 37)">Federal</text>
<text x="524" y="18" font-size="10.5" fill="#333" stroke="#fff" stroke-width="2.2" stroke-opacity="0.85" paint-order="stroke" stroke-linejoin="round" text-anchor="start" font-weight="normal" letter-spacing="-0.3"  transform="rotate(-50 524 18)">Brighton</text>
<text x="516" y="30" font-size="10.5" fill="#333" stroke="#fff" stroke-width="2.2" stroke-opacity="0.85" paint-order="stroke" stroke-linejoin="round" text-anchor="start" font-weight="normal" letter-spacing="-0.3"  transform="rotate(55 516 30)">27th St</text>
<text x="466" y="100" font-size="11" fill="#333" stroke="#fff" stroke-width="2.2" stroke-opacity="0.85" paint-order="stroke" stroke-linejoin="round" text-anchor="start" font-weight="normal" letter-spacing="-0.3"  transform="rotate(62 466 100)">Speer Blvd</text>
<text x="526" y="110" font-size="13.5" fill="#222" stroke="#fff" stroke-width="2.2" stroke-opacity="0.85" paint-order="stroke" stroke-linejoin="round" text-anchor="start" font-weight="bold" letter-spacing="1.2" >DENVER</text>
<text x="619" y="4" font-size="10.5" fill="#333" stroke="#fff" stroke-width="2.2" stroke-opacity="0.85" paint-order="stroke" stroke-linejoin="round" text-anchor="start" font-weight="normal" letter-spacing="-0.3"  transform="rotate(90 619 4)">Steele St</text>
<text x="603" y="76" font-size="10.5" fill="#333" stroke="#fff" stroke-width="2.2" stroke-opacity="0.85" paint-order="stroke" stroke-linejoin="round" text-anchor="start" font-weight="normal" letter-spacing="-0.3"  transform="rotate(-90 603 76)">York St</text>
<text x="576" y="48" font-size="10.2" fill="#333" stroke="#fff" stroke-width="2.2" stroke-opacity="0.85" paint-order="stroke" stroke-linejoin="round" text-anchor="start" font-weight="normal" letter-spacing="-0.45" >East 29th Ave</text>
<text x="675" y="60" font-size="10.2" fill="#333" stroke="#fff" stroke-width="2.2" stroke-opacity="0.85" paint-order="stroke" stroke-linejoin="round" text-anchor="start" font-weight="normal" letter-spacing="-0.45" >East 23rd Ave</text>
<text x="677" y="74" font-size="10.2" fill="#333" stroke="#fff" stroke-width="2.2" stroke-opacity="0.85" paint-order="stroke" stroke-linejoin="round" text-anchor="start" font-weight="normal" letter-spacing="-0.45" >East 23rd Ave</text>
<text x="656" y="123" font-size="10.2" fill="#333" stroke="#fff" stroke-width="2.2" stroke-opacity="0.85" paint-order="stroke" stroke-linejoin="round" text-anchor="start" font-weight="normal" letter-spacing="-0.45" >East 14th Ave</text>
<text x="654" y="134" font-size="10.5" fill="#333" stroke="#fff" stroke-width="2.2" stroke-opacity="0.85" paint-order="stroke" stroke-linejoin="round" text-anchor="start" font-weight="normal" letter-spacing="-0.3"  transform="rotate(25 654 134)">Hale Pkwy</text>
<text x="737" y="120" font-size="10.5" fill="#333" stroke="#fff" stroke-width="2.2" stroke-opacity="0.85" paint-order="stroke" stroke-linejoin="round" text-anchor="start" font-weight="normal" letter-spacing="-0.3"  transform="rotate(90 737 120)">Oneida St</text>
<text x="699" y="160" font-size="10.5" fill="#333" stroke="#fff" stroke-width="2.2" stroke-opacity="0.85" paint-order="stroke" stroke-linejoin="round" text-anchor="start" font-weight="normal" letter-spacing="-0.3"  transform="rotate(90 699 160)">Holly St</text>
<text x="576" y="172" font-size="12.3" fill="#333" stroke="#fff" stroke-width="2.2" stroke-opacity="0.85" paint-order="stroke" stroke-linejoin="round" text-anchor="start" font-weight="normal" letter-spacing="-0.3" >East 6th Ave</text>
<text x="177" y="170" font-size="10.5" fill="#333" stroke="#fff" stroke-width="2.2" stroke-opacity="0.85" paint-order="stroke" stroke-linejoin="round" text-anchor="start" font-weight="normal" letter-spacing="-0.6" >West 6th Ave</text>
<text x="260" y="198" font-size="10.2" fill="#333" stroke="#fff" stroke-width="2.2" stroke-opacity="0.85" paint-order="stroke" stroke-linejoin="round" text-anchor="start" font-weight="normal" letter-spacing="-0.45" >West 1st Ave</text>
<text x="270" y="280" font-size="10.5" fill="#333" stroke="#fff" stroke-width="2.2" stroke-opacity="0.85" paint-order="stroke" stroke-linejoin="round" text-anchor="start" font-weight="normal" letter-spacing="-0.3"  transform="rotate(-90 270 280)">South Pierce St</text>
<text x="330" y="272" font-size="10.5" fill="#333" stroke="#fff" stroke-width="2.2" stroke-opacity="0.85" paint-order="stroke" stroke-linejoin="round" text-anchor="start" font-weight="normal" letter-spacing="-0.3"  transform="rotate(-40 330 272)">Morrison Rd</text>
<text x="385" y="230" font-size="10.5" fill="#333" stroke="#fff" stroke-width="2.2" stroke-opacity="0.85" paint-order="stroke" stroke-linejoin="round" text-anchor="start" font-weight="normal" letter-spacing="-0.3"  transform="rotate(90 385 230)">South Irving St</text>
<text x="376" y="294" font-size="10.2" fill="#333" stroke="#fff" stroke-width="2.2" stroke-opacity="0.85" paint-order="stroke" stroke-linejoin="round" text-anchor="start" font-weight="normal" letter-spacing="-0.45" >West Louisiana Ave</text>
<text x="328" y="308" font-size="10.2" fill="#333" stroke="#fff" stroke-width="2.2" stroke-opacity="0.85" paint-order="stroke" stroke-linejoin="round" text-anchor="start" font-weight="normal" letter-spacing="-0.45" >West Florida Ave</text>
<text x="323" y="335" font-size="10.2" fill="#333" stroke="#fff" stroke-width="2.2" stroke-opacity="0.85" paint-order="stroke" stroke-linejoin="round" text-anchor="start" font-weight="normal" letter-spacing="-0.45" >West Jewell Ave</text>
<text x="330" y="347" font-size="10.5" fill="#333" stroke="#fff" stroke-width="2.2" stroke-opacity="0.85" paint-order="stroke" stroke-linejoin="round" text-anchor="start" font-weight="normal" letter-spacing="-0.4"  transform="rotate(4 330 347)">West Evans Ave</text>
<text x="271" y="390" font-size="10.2" fill="#333" stroke="#fff" stroke-width="2.2" stroke-opacity="0.85" paint-order="stroke" stroke-linejoin="round" text-anchor="start" font-weight="normal" letter-spacing="-0.45" >West Yale Ave</text>
<text x="18" y="330" font-size="10.5" fill="#333" stroke="#fff" stroke-width="2.2" stroke-opacity="0.85" paint-order="stroke" stroke-linejoin="round" text-anchor="start" font-weight="normal" letter-spacing="-0.3"  transform="rotate(-52 18 330)">West Alameda Pkwy</text>
<text x="68" y="297" font-size="10.5" fill="#333" stroke="#fff" stroke-width="2.2" stroke-opacity="0.85" paint-order="stroke" stroke-linejoin="round" text-anchor="start" font-weight="normal" letter-spacing="-0.3"  transform="rotate(68 68 297)">South Wright St</text>
<text x="14" y="398" font-size="10.5" fill="#333" stroke="#fff" stroke-width="2.2" stroke-opacity="0.85" paint-order="stroke" stroke-linejoin="round" text-anchor="start" font-weight="normal" letter-spacing="-0.3"  transform="rotate(-30 14 398)">Morrison Rd</text>
<text x="-2" y="256" font-size="10.5" fill="#8a6f6a" stroke="#fff" stroke-width="2.2" stroke-opacity="0.85" paint-order="stroke" stroke-linejoin="round" text-anchor="start" font-weight="normal" letter-spacing="-0.3" font-style="italic">ountain</text>
<text x="460" y="322" font-size="11" fill="#8a6f6a" stroke="#fff" stroke-width="2.2" stroke-opacity="0.85" paint-order="stroke" stroke-linejoin="round" text-anchor="start" font-weight="normal" letter-spacing="-0.3" font-style="italic">Ruby Hill</text>
<path d="M453 329 L458 322 L463 329Z" fill="none" stroke="#333" stroke-width="1"/>
<text x="530" y="341" font-size="10.5" fill="#333" stroke="#fff" stroke-width="2.2" stroke-opacity="0.85" paint-order="stroke" stroke-linejoin="round" text-anchor="start" font-weight="normal" letter-spacing="-0.3"  transform="rotate(-90 530 341)">South Logan St</text>
<text x="463" y="200" font-size="10.5" fill="#5a6f90" stroke="#fff" stroke-width="2.2" stroke-opacity="0.85" paint-order="stroke" stroke-linejoin="round" text-anchor="start" font-weight="normal" letter-spacing="-0.3"  transform="rotate(64 463 200)">South Platte River</text>
<text x="551" y="211" font-size="10.5" fill="#333" stroke="#fff" stroke-width="2.2" stroke-opacity="0.85" paint-order="stroke" stroke-linejoin="round" text-anchor="start" font-weight="normal" letter-spacing="-0.3"  transform="rotate(90 551 211)">South Downing St</text>
<text x="675" y="241" font-size="10.5" fill="#444" stroke="#fff" stroke-width="2.2" stroke-opacity="0.85" paint-order="stroke" stroke-linejoin="round" text-anchor="start" font-weight="normal" letter-spacing="0.9" >Glendale</text>
<circle cx="670" cy="246" r="2.8" fill="#fff" stroke="#333" stroke-width="1"/>
<text x="678" y="336" font-size="10.2" fill="#333" stroke="#fff" stroke-width="2.2" stroke-opacity="0.85" paint-order="stroke" stroke-linejoin="round" text-anchor="start" font-weight="normal" letter-spacing="-0.45" >East Jewell Ave</text>
<text x="680" y="350" font-size="10.2" fill="#333" stroke="#fff" stroke-width="2.2" stroke-opacity="0.85" paint-order="stroke" stroke-linejoin="round" text-anchor="start" font-weight="normal" letter-spacing="-0.45" >East Evans Ave</text>
<text x="589" y="363" font-size="10.2" fill="#333" stroke="#fff" stroke-width="2.2" stroke-opacity="0.85" paint-order="stroke" stroke-linejoin="round" text-anchor="start" font-weight="normal" letter-spacing="-0.45" >East Iliff Ave</text>
<text x="78" y="102" font-size="7.5" text-anchor="middle" fill="#333" stroke="#fff" stroke-width="2" paint-order="stroke" letter-spacing="0.8">BUS</text>
<path d="M67 104 Q72.5 106 78 104 Q83.5 106 89 104 Q90 117 78 125 Q66 117 67 104Z" fill="#1e8a3e" stroke="#fff" stroke-width="1.2"/>
<text x="78" y="118" font-size="11" font-weight="bold" text-anchor="middle" fill="#fff">70</text>
<text x="399" y="102" font-size="7.5" text-anchor="middle" fill="#333" stroke="#fff" stroke-width="2" paint-order="stroke" letter-spacing="0.8">BUS</text>
<path d="M388 104 Q393.5 106 399 104 Q404.5 106 410 104 Q411 117 399 125 Q387 117 388 104Z" fill="#1e8a3e" stroke="#fff" stroke-width="1.2"/>
<text x="399" y="118" font-size="11" font-weight="bold" text-anchor="middle" fill="#fff">70</text>
<text x="733" y="101" font-size="7.5" text-anchor="middle" fill="#333" stroke="#fff" stroke-width="2" paint-order="stroke" letter-spacing="0.8">BUS</text>
<path d="M722 103 Q727.5 105 733 103 Q738.5 105 744 103 Q745 116 733 124 Q721 116 722 103Z" fill="#1e8a3e" stroke="#fff" stroke-width="1.2"/>
<text x="733" y="117" font-size="11" font-weight="bold" text-anchor="middle" fill="#fff">70</text>
<path d="M89.5 103 Q93.5 100 95.5 103 Q100.5 99 105.5 103 Q107.5 100 111.5 103 Q113.5 115 109.5 119 Q103.5 121 100.5 124 Q97.5 121 91.5 119 Q87.5 115 89.5 103Z" fill="#fff" stroke="#444" stroke-width="0.9"/>
<text x="100.5" y="116.5" font-size="11" text-anchor="middle" fill="#111">40</text>
<path d="M413.0 102 Q417.0 99 419.0 102 Q424 98 429.0 102 Q431.0 99 435.0 102 Q437.0 114 433.0 118 Q427 120 424 123 Q421 120 415.0 118 Q411.0 114 413.0 102Z" fill="#fff" stroke="#444" stroke-width="0.9"/>
<text x="424" y="115.5" font-size="11" text-anchor="middle" fill="#111">40</text>
<path d="M744.5 103 Q748.5 100 750.5 103 Q755.5 99 760.5 103 Q762.5 100 766.5 103 Q768.5 115 764.5 119 Q758.5 121 755.5 124 Q752.5 121 746.5 119 Q742.5 115 744.5 103Z" fill="#fff" stroke="#444" stroke-width="0.9"/>
<text x="755.5" y="116.5" font-size="11" text-anchor="middle" fill="#111">40</text>
<path d="M393.0 40 Q397.0 37 399.0 40 Q405 36 411.0 40 Q413.0 37 417.0 40 Q419.0 52 415.0 56 Q408 58 405 61 Q402 58 395.0 56 Q391.0 52 393.0 40Z" fill="#fff" stroke="#444" stroke-width="0.9"/>
<text x="405" y="53.5" font-size="11" text-anchor="middle" fill="#111">287</text>
<path d="M477.0 8 Q481.0 5 483.0 8 Q488 4 493.0 8 Q495.0 5 499.0 8 Q501.0 20 497.0 24 Q491 26 488 29 Q485 26 479.0 24 Q475.0 20 477.0 8Z" fill="#fff" stroke="#444" stroke-width="0.9"/>
<text x="488" y="21.5" font-size="11" text-anchor="middle" fill="#111">6</text>
<path d="M21.5 159 Q25.5 156 27.5 159 Q32.5 155 37.5 159 Q39.5 156 43.5 159 Q45.5 171 41.5 175 Q35.5 177 32.5 180 Q29.5 177 23.5 175 Q19.5 171 21.5 159Z" fill="#fff" stroke="#444" stroke-width="0.9"/>
<text x="32.5" y="172.5" font-size="11" text-anchor="middle" fill="#111">6</text>
<path d="M454 6 Q459.5 8 465 6 Q470.5 8 476 6 Q477 19 465 27 Q453 19 454 6Z" fill="#2a56a0" stroke="#fff" stroke-width="1.2"/>
<path d="M454 6 Q459.5 8 465 6 Q470.5 8 476 6 L476 10 L454 10Z" fill="#c8323a"/>
<text x="465" y="20" font-size="11" font-weight="bold" text-anchor="middle" fill="#fff">25</text>
<path d="M687.5 388 Q693.0 390 698.5 388 Q704.0 390 709.5 388 Q710.5 401 698.5 409 Q686.5 401 687.5 388Z" fill="#2a56a0" stroke="#fff" stroke-width="1.2"/>
<path d="M687.5 388 Q693.0 390 698.5 388 Q704.0 390 709.5 388 L709.5 392 L687.5 392Z" fill="#c8323a"/>
<text x="698.5" y="402" font-size="11" font-weight="bold" text-anchor="middle" fill="#fff">25</text>
<rect x="227.5" y="132" width="22" height="22" fill="#fff" stroke="#333" stroke-width="0.8"/>
<rect x="227.5" y="132" width="22" height="9" fill="#2a4f9a"/>
<rect x="227.5" y="135" width="22" height="3" fill="#fff"/>
<circle cx="231.5" cy="136.5" r="2" fill="#d8342a"/>
<circle cx="231.5" cy="136.5" r="0.9" fill="#f3c03a"/>
<text x="238.5" y="151.5" font-size="11" text-anchor="middle" fill="#111" letter-spacing="0.6">121</text>
<rect x="310.0" y="132" width="22" height="22" fill="#fff" stroke="#333" stroke-width="0.8"/>
<rect x="310.0" y="132" width="22" height="9" fill="#2a4f9a"/>
<rect x="310.0" y="135" width="22" height="3" fill="#fff"/>
<circle cx="314.0" cy="136.5" r="2" fill="#d8342a"/>
<circle cx="314.0" cy="136.5" r="0.9" fill="#f3c03a"/>
<text x="321" y="151.5" font-size="11" text-anchor="middle" fill="#111" letter-spacing="0.6">95</text>
<rect x="145.5" y="152" width="22" height="22" fill="#fff" stroke="#333" stroke-width="0.8"/>
<rect x="145.5" y="152" width="22" height="9" fill="#2a4f9a"/>
<rect x="145.5" y="155" width="22" height="3" fill="#fff"/>
<circle cx="149.5" cy="156.5" r="2" fill="#d8342a"/>
<circle cx="149.5" cy="156.5" r="0.9" fill="#f3c03a"/>
<text x="156.5" y="171.5" font-size="11" text-anchor="middle" fill="#111" letter-spacing="0.6">391</text>
<rect x="390.5" y="156" width="22" height="22" fill="#fff" stroke="#333" stroke-width="0.8"/>
<rect x="390.5" y="156" width="22" height="9" fill="#2a4f9a"/>
<rect x="390.5" y="159" width="22" height="3" fill="#fff"/>
<circle cx="394.5" cy="160.5" r="2" fill="#d8342a"/>
<circle cx="394.5" cy="160.5" r="0.9" fill="#f3c03a"/>
<text x="401.5" y="175.5" font-size="11" text-anchor="middle" fill="#111" letter-spacing="0.6">88</text>
<rect x="395.5" y="210" width="22" height="22" fill="#fff" stroke="#333" stroke-width="0.8"/>
<rect x="395.5" y="210" width="22" height="9" fill="#2a4f9a"/>
<rect x="395.5" y="213" width="22" height="3" fill="#fff"/>
<circle cx="399.5" cy="214.5" r="2" fill="#d8342a"/>
<circle cx="399.5" cy="214.5" r="0.9" fill="#f3c03a"/>
<text x="406.5" y="229.5" font-size="11" text-anchor="middle" fill="#111" letter-spacing="0.6">26</text>
<rect x="637.5" y="73" width="22" height="22" fill="#fff" stroke="#333" stroke-width="0.8"/>
<rect x="637.5" y="73" width="22" height="9" fill="#2a4f9a"/>
<rect x="637.5" y="76" width="22" height="3" fill="#fff"/>
<circle cx="641.5" cy="77.5" r="2" fill="#d8342a"/>
<circle cx="641.5" cy="77.5" r="0.9" fill="#f3c03a"/>
<text x="648.5" y="92.5" font-size="11" text-anchor="middle" fill="#111" letter-spacing="0.6">2</text>
<rect x="638.0" y="374" width="22" height="22" fill="#fff" stroke="#333" stroke-width="0.8"/>
<rect x="638.0" y="374" width="22" height="9" fill="#2a4f9a"/>
<rect x="638.0" y="377" width="22" height="3" fill="#fff"/>
<circle cx="642.0" cy="378.5" r="2" fill="#d8342a"/>
<circle cx="642.0" cy="378.5" r="0.9" fill="#f3c03a"/>
<text x="649" y="393.5" font-size="11" text-anchor="middle" fill="#111" letter-spacing="0.6">2</text>
<rect x="143.0" y="371" width="22" height="22" fill="#fff" stroke="#333" stroke-width="0.8"/>
<rect x="143.0" y="371" width="22" height="9" fill="#2a4f9a"/>
<rect x="143.0" y="374" width="22" height="3" fill="#fff"/>
<circle cx="147.0" cy="375.5" r="2" fill="#d8342a"/>
<circle cx="147.0" cy="375.5" r="0.9" fill="#f3c03a"/>
<text x="154" y="390.5" font-size="11" text-anchor="middle" fill="#111" letter-spacing="0.6">8</text>
<rect x="789.0" y="291" width="22" height="22" fill="#fff" stroke="#333" stroke-width="0.8"/>
<rect x="789.0" y="291" width="22" height="9" fill="#2a4f9a"/>
<rect x="789.0" y="294" width="22" height="3" fill="#fff"/>
<circle cx="793.0" cy="295.5" r="2" fill="#d8342a"/>
<circle cx="793.0" cy="295.5" r="0.9" fill="#f3c03a"/>
<text x="800" y="310.5" font-size="11" text-anchor="middle" fill="#111" letter-spacing="0.6">83</text>
<path d="M466.0 416 Q470.0 413 472.0 416 Q477 412 482.0 416 Q484.0 413 488.0 416 Q490.0 428 486.0 432 Q480 434 477 437 Q474 434 468.0 432 Q464.0 428 466.0 416Z" fill="#fff" stroke="#444" stroke-width="0.9"/>
<text x="477" y="429.5" font-size="11" text-anchor="middle" fill="#111">85</text>
</svg>
<div class="b" style="left:59px;top:358px;width:26px;height:53px;background:#fff;border-radius:4px;box-shadow:0 1px 5px rgba(0,0,0,0.45)"></div>
<div class="b" style="left:59px;top:384px;width:26px;height:1px;background:#ddd"></div>
<svg class="b" style="left:59px;top:358px" width="26" height="53"><path d="M13 7.5V18.5M7.5 13H18.5" stroke="#111" stroke-width="2.6"/><path d="M8.5 40H17.5" stroke="#111" stroke-width="2.6"/></svg>
<div class="b" style="left:59px;top:421px;width:26px;height:53px;background:#fff;border-radius:4px;box-shadow:0 1px 5px rgba(0,0,0,0.45)"></div>
<div class="b" style="left:59px;top:447px;width:26px;height:1px;background:#ddd"></div>
<svg class="b" style="left:59px;top:421px" width="26" height="53"><path d="M13 6.5L19.5 11.2L17 18.8L9 18.8L6.5 11.2Z" fill="#444"/><rect x="8" y="35" width="10" height="10" fill="#444"/></svg>
<div class="b" style="left:745px;top:358px;width:94px;height:53px;background:#fff;border-radius:4px;box-shadow:0 1px 5px rgba(0,0,0,0.45)"></div>
<div class="b" style="left:745px;top:384px;width:94px;height:1px;background:#ddd"></div>
<div class="t" style="left:745px;top:363.5px;width:94px;text-align:center;font-size:12.5px;line-height:14px;color:#222">Clear Selection</div>
<div class="t" style="left:745px;top:391px;width:94px;text-align:center;font-size:12.5px;line-height:14px;color:#222">Reset Map</div>
<svg class="b" style="left:493px;top:361px" width="40" height="34"><path d="M11 31.5 C9.5 24 1 17.5 1 10.3 C1 4.5 5.5 0.8 11 0.8 C16.5 0.8 21 4.5 21 10.3 C21 17.5 12.5 24 11 31.5Z" fill="#5d8fc5" stroke="#3f6e9f" stroke-width="1.1"/><circle cx="11" cy="10" r="3.6" fill="#1d3a57"/></svg>
<svg class="b" style="left:552px;top:434px" width="40" height="34"><path d="M11 31.5 C9.5 24 1 17.5 1 10.3 C1 4.5 5.5 0.8 11 0.8 C16.5 0.8 21 4.5 21 10.3 C21 17.5 12.5 24 11 31.5Z" fill="#5d8fc5" stroke="#3f6e9f" stroke-width="1.1"/><circle cx="11" cy="10" r="3.6" fill="#1d3a57"/></svg>
<svg class="b" style="left:552px;top:488px" width="40" height="34"><path d="M11 31.5 C9.5 24 1 17.5 1 10.3 C1 4.5 5.5 0.8 11 0.8 C16.5 0.8 21 4.5 21 10.3 C21 17.5 12.5 24 11 31.5Z" fill="#727272" stroke="#4f4f4f" stroke-width="1.1"/><circle cx="11" cy="10" r="3.6" fill="#ffffff"/></svg>
<svg class="b" style="left:552px;top:521px" width="40" height="34"><path d="M11 31.5 C9.5 24 1 17.5 1 10.3 C1 4.5 5.5 0.8 11 0.8 C16.5 0.8 21 4.5 21 10.3 C21 17.5 12.5 24 11 31.5Z" fill="#5d8fc5" stroke="#3f6e9f" stroke-width="1.1"/><circle cx="11" cy="10" r="3.6" fill="#1d3a57"/></svg>
<svg class="b" style="left:562px;top:456px" width="14" height="14"><circle cx="7" cy="7" r="5.5" fill="#fff" stroke="#333" stroke-width="1"/><path d="M7 3.2L8 6L10.8 6L8.6 7.8L9.4 10.6L7 9L4.6 10.6L5.4 7.8L3.2 6L6 6Z" fill="#333"/></svg>
<div class="t" style="left:874px;top:359.95px;font-size:14px;line-height:14px;color:#333;"><b>1–5</b> of <b>5</b> Jobs</div>
<div class="b" style="left:973px;top:357px;width:1px;height:21px;background:#ddd"></div>
<div class="t" style="left:987px;top:359.95px;font-size:14px;line-height:14px;color:#333;"><b>3</b> selected</div>
<div class="b" style="left:1064px;top:357px;width:1px;height:21px;background:#ddd"></div>
<div class="t" style="left:1077.5px;top:359.95px;font-size:14px;line-height:14px;color:#333;"><b>3</b> unique locations</div>
<div class="cb" style="left:893px;top:394px;background:linear-gradient(#f0f0f0,#dcdcdc);border-color:#b8b8b8"></div>
<div class="t" style="left:925.5px;top:395.70px;font-size:13px;line-height:13px;color:#777;font-weight:bold;">Job</div>
<div class="b" style="left:873px;top:419px;width:774px;height:101px;background:#6897c4"></div>
<div class="cb" style="left:893px;top:430px"></div>
<svg class="b" style="left:893px;top:430px" width="12" height="12"><path d="M2.6 6.3L5 8.8L9.6 2.6" fill="none" stroke="#222" stroke-width="2"/></svg>
<div class="t" style="left:927px;top:431.53px;font-size:13.2px;line-height:13.2px;color:#eef2f7;font-weight:bold;">558271</div>
<div class="t" style="left:993.5px;top:432.43px;font-size:13.2px;line-height:13.2px;color:#eef2f7;font-weight:bold;">Missy Thompsonn</div>
<div class="t" style="left:993.5px;top:453.03px;font-size:13.2px;line-height:13.2px;color:#eef2f7;font-weight:bold;">50 Platte Blvd, Denver, CO 80202</div>
<div class="t" style="left:926.5px;top:474.13px;font-size:13.2px;line-height:13.2px;color:#eef2f7;font-weight:bold;">Client:</div>
<div class="t" style="left:993.5px;top:474.13px;font-size:13.2px;line-height:13.2px;color:#eef2f7;font-weight:bold;">Blake St Law</div>
<div class="t" style="left:926.5px;top:494.83px;font-size:13.2px;line-height:13.2px;color:#eef2f7;font-weight:bold;">Server:</div>
<div class="t" style="left:993.5px;top:494.83px;font-size:13.2px;line-height:13.2px;color:#eef2f7;font-weight:bold;">Jose Trujillo (ServeManager Support)</div>
<div class="t" style="left:1483.5px;top:474.13px;font-size:13.2px;line-height:13.2px;color:#eef2f7;font-weight:bold;">Status:</div>
<div class="t" style="left:1543px;top:474.13px;font-size:13.2px;line-height:13.2px;color:#eef2f7;font-weight:bold;">Served</div>
<div class="t" style="left:1483.5px;top:494.83px;font-size:13.2px;line-height:13.2px;color:#eef2f7;font-weight:bold;">Due:</div>
<div class="t" style="left:1543px;top:494.83px;font-size:13.2px;line-height:13.2px;color:#eef2f7;font-weight:bold;">May 20, 2015</div>
<div class="b" style="left:873px;top:521px;width:774px;height:101px;background:#6897c4"></div>
<div class="cb" style="left:893px;top:532px"></div>
<svg class="b" style="left:893px;top:532px" width="12" height="12"><path d="M2.6 6.3L5 8.8L9.6 2.6" fill="none" stroke="#222" stroke-width="2"/></svg>
<div class="t" style="left:927px;top:533.53px;font-size:13.2px;line-height:13.2px;color:#eef2f7;font-weight:bold;">331030</div>
<div class="t" style="left:993.5px;top:534.43px;font-size:13.2px;line-height:13.2px;color:#eef2f7;font-weight:bold;">Missy Thompson</div>
<div class="t" style="left:993.5px;top:555.03px;font-size:13.2px;line-height:13.2px;color:#eef2f7;font-weight:bold;">1423 S Broadway, Denver, CO 80202</div>
<div class="t" style="left:926.5px;top:576.13px;font-size:13.2px;line-height:13.2px;color:#eef2f7;font-weight:bold;">Client:</div>
<div class="t" style="left:993.5px;top:576.13px;font-size:13.2px;line-height:13.2px;color:#eef2f7;font-weight:bold;">Denver Law</div>
<div class="t" style="left:926.5px;top:596.83px;font-size:13.2px;line-height:13.2px;color:#eef2f7;font-weight:bold;">Server:</div>
<div class="t" style="left:993.5px;top:596.83px;font-size:13.2px;line-height:13.2px;color:#eef2f7;font-weight:bold;">Amanda Handley</div>
<div class="t" style="left:1483.5px;top:576.13px;font-size:13.2px;line-height:13.2px;color:#eef2f7;font-weight:bold;">Status:</div>
<div class="t" style="left:1543px;top:576.13px;font-size:13.2px;line-height:13.2px;color:#eef2f7;font-weight:bold;">Served</div>
<div class="t" style="left:1483.5px;top:596.83px;font-size:13.2px;line-height:13.2px;color:#eef2f7;font-weight:bold;">Due:</div>
<div class="t" style="left:1543px;top:596.83px;font-size:13.2px;line-height:13.2px;color:#eef2f7;font-weight:bold;">Jul 25, 2015</div>
<div class="b" style="left:873px;top:623px;width:774px;height:101px;background:#eaeac4"></div>
<div class="cb" style="left:893px;top:634px"></div>
<div class="t" style="left:927px;top:635.53px;font-size:13.2px;line-height:13.2px;color:#5b87b6;font-weight:bold;">499266</div>
<div class="t" style="left:993.5px;top:636.43px;font-size:13.2px;line-height:13.2px;color:#e21c1c;font-weight:bold;">Missy Thompsonn</div>
<div class="t" style="left:993.5px;top:657.03px;font-size:13.2px;line-height:13.2px;color:#e21c1c;font-weight:bold;">50 Platte Blvd, Denver, CO 80202</div>
<div class="t" style="left:926.5px;top:678.13px;font-size:13.2px;line-height:13.2px;color:#e21c1c;font-weight:bold;">Client:</div>
<div class="t" style="left:993.5px;top:678.13px;font-size:13.2px;line-height:13.2px;color:#e21c1c;font-weight:bold;">Blake St Law</div>
<div class="t" style="left:926.5px;top:698.83px;font-size:13.2px;line-height:13.2px;color:#e21c1c;font-weight:bold;">Server:</div>
<div class="t" style="left:993.5px;top:698.83px;font-size:13.2px;line-height:13.2px;color:#e21c1c;font-weight:bold;">Kimberly Faber</div>
<div class="t" style="left:1483.5px;top:678.13px;font-size:13.2px;line-height:13.2px;color:#e21c1c;font-weight:bold;">Status:</div>
<div class="t" style="left:1543px;top:678.13px;font-size:13.2px;line-height:13.2px;color:#e21c1c;font-weight:bold;"></div>
<div class="t" style="left:1483.5px;top:698.83px;font-size:13.2px;line-height:13.2px;color:#e21c1c;font-weight:bold;">Due:</div>
<div class="t" style="left:1543px;top:698.83px;font-size:13.2px;line-height:13.2px;color:#e21c1c;font-weight:bold;">Jul 31, 2015</div>
<div class="b" style="left:873px;top:725px;width:774px;height:46px;background:#6897c4"></div>
<div class="cb" style="left:893px;top:736px"></div>
<svg class="b" style="left:893px;top:736px" width="12" height="12"><path d="M2.6 6.3L5 8.8L9.6 2.6" fill="none" stroke="#222" stroke-width="2"/></svg>
<div class="t" style="left:927px;top:737.53px;font-size:13.2px;line-height:13.2px;color:#eef2f7;font-weight:bold;">392659</div>
<div class="t" style="left:993.5px;top:738.43px;font-size:13.2px;line-height:13.2px;color:#eef2f7;font-weight:bold;">Jane Tully</div>
<div class="t" style="left:993.5px;top:759.03px;font-size:13.2px;line-height:13.2px;color:#eef2f7;font-weight:bold;">50 S Broadway, Denver, CO 80209</div>
<div class="t" style="left:926.5px;top:780.13px;font-size:13.2px;line-height:13.2px;color:#eef2f7;font-weight:bold;">Client:</div>
<div class="t" style="left:993.5px;top:780.13px;font-size:13.2px;line-height:13.2px;color:#eef2f7;font-weight:bold;"></div>
<div class="t" style="left:926.5px;top:800.83px;font-size:13.2px;line-height:13.2px;color:#eef2f7;font-weight:bold;">Server:</div>
<div class="t" style="left:993.5px;top:800.83px;font-size:13.2px;line-height:13.2px;color:#eef2f7;font-weight:bold;"></div>
<div class="b" style="left:873px;top:520px;width:774px;height:1px;background:#cddcec"></div>
<div class="b" style="left:873px;top:622px;width:774px;height:1px;background:#dfe6e4"></div>
<div class="b" style="left:873px;top:724px;width:774px;height:1px;background:#d9e3e6"></div>
<div class="b" style="left:1230px;top:348px;width:254px;height:30px;background:#fff;border:1px solid #4d86c6;box-shadow:0 0 3px #9cc8f0"></div>
<div class="t" style="left:1242px;top:355.65px;font-size:14px;line-height:14px;color:#3a3a3a;word-spacing:1.5px;">– Options –</div>
<div class="b" style="left:1470px;top:360px;width:0;height:0;border-left:3.5px solid transparent;border-right:3.5px solid transparent;border-top:6px solid #111"></div>
<div class="b" style="left:1230px;top:378.5px;width:254px;height:92px;background:#fff;border:1px solid #a9a9a9;border-top:none"></div>
<div class="b" style="left:1231px;top:378.5px;width:252px;height:19px;background:#1e90ff"></div>
<div class="t" style="left:1242px;top:381.15px;font-size:14px;line-height:14px;color:#fff;word-spacing:1.5px;">– Options –</div>
<div class="t" style="left:1242px;top:399.35px;font-size:14px;line-height:14px;color:#333;">Archive Jobs</div>
<div class="t" style="left:1242px;top:417.45px;font-size:14px;line-height:14px;color:#333;">Assign Jobs to Server</div>
<div class="t" style="left:1242px;top:435.55px;font-size:14px;line-height:14px;color:#333;">Update Job Status</div>
<div class="t" style="left:1242px;top:453.65px;font-size:14px;line-height:14px;color:#333;">Route Jobs</div>
</body></html>
